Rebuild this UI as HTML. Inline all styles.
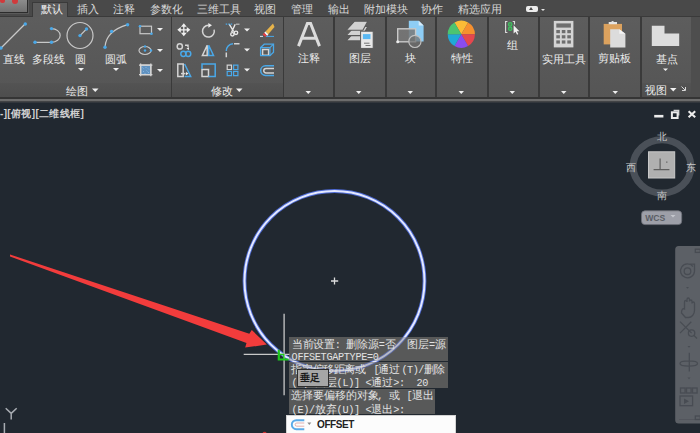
<!DOCTYPE html>
<html><head><meta charset="utf-8">
<style>
*{margin:0;padding:0;box-sizing:border-box}
html,body{width:700px;height:433px;overflow:hidden;background:#212830;font-family:"Liberation Sans",sans-serif}
.a{position:absolute}
.t{position:absolute;white-space:nowrap;font-size:11px;line-height:12px}
.tab{color:#d8d8d8;top:3px;font-weight:500}
.lb{color:#ececec;font-weight:500}
svg{position:absolute;left:0;top:0}
.tc{font-size:10.6px;fill:#e2e2e2}
.ta{font-family:"Liberation Mono",monospace;font-size:10.2px;fill:#e2e2e2}
.vc{font-size:9.5px;fill:#c8c8c8}
</style></head><body>
<!-- tab bar -->
<div class="a" style="left:0;top:0;width:700px;height:17px;background:#494949"></div>
<div class="a" style="left:0;top:0;width:29px;height:14px;background:#5a5a5a"></div>
<div class="a" style="left:0;top:0;width:28px;height:13px;background:linear-gradient(#8c8c8c,#707070);border-right:1px solid #2c2c2c;border-bottom:1px solid #2c2c2c"></div>
<div class="a" style="left:0;top:0;width:4.5px;height:3px;background:#d03a3c;border-radius:0 0 2px 2px"></div>
<div class="a" style="left:12px;top:0;width:5.5px;height:3.5px;background:#d03a3c;border-radius:0 0 3px 3px"></div>
<div class="t tab" style="left:77px">插入</div>
<div class="t tab" style="left:113px">注释</div>
<div class="t tab" style="left:150px">参数化</div>
<div class="t tab" style="left:197px">三维工具</div>
<div class="t tab" style="left:254px">视图</div>
<div class="t tab" style="left:291px">管理</div>
<div class="t tab" style="left:328px">输出</div>
<div class="t tab" style="left:364px">附加模块</div>
<div class="t tab" style="left:421px">协作</div>
<div class="t tab" style="left:458px">精选应用</div>
<div class="a" style="left:525.5px;top:5.5px;width:12px;height:6px;background:#ececec;border-radius:2px"></div>
<div class="a" style="left:529px;top:7px;width:0;height:0;border-left:2.5px solid transparent;border-right:2.5px solid transparent;border-bottom:3px solid #494949"></div>
<div class="a" style="left:541px;top:9px;width:0;height:0;border-left:2.5px solid transparent;border-right:2.5px solid transparent;border-top:2.5px solid #e4e4e4"></div>

<!-- ribbon -->
<div class="a" style="left:0;top:16px;width:700px;height:82px;background:#3a3a3a"></div>
<div class="a" style="left:32px;top:2px;width:36px;height:16px;background:#5c5c5c;border-left:1px solid #3a3a3a;border-top:1px solid #3a3a3a;border-right:1px solid #3a3a3a;border-bottom:0"></div>
<div class="t tab" style="left:41px;color:#f2f2f2">默认</div>
<div class="a" style="left:0px;top:17px;width:171px;height:80px;background:linear-gradient(#5d5d5d,#555555)"></div>
<div class="a" style="left:172px;top:17px;width:111px;height:80px;background:linear-gradient(#5d5d5d,#555555)"></div>
<div class="a" style="left:284px;top:17px;width:49px;height:80px;background:linear-gradient(#5d5d5d,#555555)"></div>
<div class="a" style="left:335px;top:17px;width:50px;height:80px;background:linear-gradient(#5d5d5d,#555555)"></div>
<div class="a" style="left:387px;top:17px;width:48px;height:80px;background:linear-gradient(#5d5d5d,#555555)"></div>
<div class="a" style="left:437px;top:17px;width:50px;height:80px;background:linear-gradient(#5d5d5d,#555555)"></div>
<div class="a" style="left:489px;top:17px;width:49px;height:80px;background:linear-gradient(#5d5d5d,#555555)"></div>
<div class="a" style="left:540px;top:17px;width:48px;height:80px;background:linear-gradient(#5d5d5d,#555555)"></div>
<div class="a" style="left:590px;top:17px;width:50px;height:80px;background:linear-gradient(#5d5d5d,#555555)"></div>
<div class="a" style="left:642px;top:17px;width:49px;height:80px;background:linear-gradient(#5d5d5d,#555555)"></div>
<div class="a" style="left:691px;top:17px;width:9px;height:80px;background:#4e4e4e"></div>
<!-- label rows -->
<div class="a" style="left:0;top:83px;width:171px;height:14px;background:linear-gradient(#535353,#4e4e4e)"></div>
<div class="a" style="left:172px;top:83px;width:111px;height:14px;background:linear-gradient(#535353,#4e4e4e)"></div>
<div class="a" style="left:642px;top:83px;width:49px;height:14px;background:linear-gradient(#535353,#4e4e4e)"></div>
<div class="a" style="left:0;top:97px;width:700px;height:2px;background:#353535"></div>
<div class="a" style="left:0;top:99px;width:700px;height:1.5px;background:#6c6c6c"></div>
<div class="a" style="left:0;top:100.5px;width:700px;height:2px;background:linear-gradient(#4a4a4a,#2a3038)"></div>

<div class="t lb" style="left:3px;top:53.3px">直线</div>
<div class="t lb" style="left:32px;top:53.3px">多段线</div>
<div class="t lb" style="left:75px;top:53.3px">圆</div>
<div class="t lb" style="left:105px;top:53.3px">圆弧</div>
<div class="t lb" style="left:66px;top:85px">绘图</div>
<div class="t lb" style="left:211px;top:85px">修改</div>
<div class="t lb" style="left:297.5px;top:52px">注释</div>
<div class="t lb" style="left:348.5px;top:52px">图层</div>
<div class="t lb" style="left:404.5px;top:52px">块</div>
<div class="t lb" style="left:451px;top:52px">特性</div>
<div class="t lb" style="left:507px;top:38.5px">组</div>
<div class="t lb" style="left:541.8px;top:52.8px">实用工具</div>
<div class="t lb" style="left:598.3px;top:51.5px">剪贴板</div>
<div class="t lb" style="left:656px;top:53.2px">基点</div>
<div class="t lb" style="left:644.5px;top:83.6px">视图</div>

<!-- viewport -->
<div class="a" style="left:0;top:102.5px;width:700px;height:331px;background:#212830"></div>
<div class="t" style="left:0;top:107.5px;font-size:10px;color:#d0d0d0;font-weight:bold;letter-spacing:.35px">-][俯视][二维线框]</div>

<svg width="700" height="433" viewBox="0 0 700 433">
 <defs>
  <filter id="glow" x="-20%" y="-20%" width="140%" height="140%"><feGaussianBlur stdDeviation="0.75"/></filter>
 </defs>
 <g fill="#f0f0f0">
  <path d="M78,68h6l-3,3z"/><path d="M113,68h6l-3,3z"/>
  <path d="M157,28h6l-3,3z"/><path d="M157,49h6l-3,3z"/><path d="M157,69h6l-3,3z"/>
  <path d="M92,88.5h6.5l-3.25,3.5z"/><path d="M236,88.5h6.5l-3.25,3.5z"/>
  <path d="M244,28.5h6l-3,3z"/><path d="M244,48.5h6l-3,3z"/><path d="M244,68.5h6l-3,3z"/>
  <path d="M305.5,91h5.5l-2.75,3z"/><path d="M356,91h5.5l-2.75,3z"/><path d="M407.5,91h5.5l-2.75,3z"/><path d="M458.5,91h5.5l-2.75,3z"/>
  <path d="M509.5,91h5.5l-2.75,3z"/><path d="M561,91h5.5l-2.75,3z"/><path d="M612.5,91h5.5l-2.75,3z"/><path d="M663,68.5h5l-2.5,2.5z"/>
  <path d="M670,88h6.5l-3.25,3.5z"/>
 </g>
 <path d="M681.5,86.5l3.5,3.5M685.5,87v3.5h-3.5" stroke="#d8d8d8" stroke-width="1" fill="none"/>
 <!-- draw icons -->
 <g stroke="#c8c8c8" stroke-width="1.2" fill="none">
  <path d="M1,48 L25,24"/>
  <path d="M35,42.3H51.5 A8.7,6.85 0 0 0 51.5,28.6"/>
  <circle cx="80" cy="35.5" r="13"/>
  <path d="M86.5,29L80,35.6"/>
  <path d="M105,47.2 Q106,31 127.6,24.7"/>
  <rect x="140" y="26.2" width="11.5" height="7.5"/>
  <ellipse cx="145" cy="50.5" rx="6" ry="4"/>
 </g>
 <g fill="#4aa8e8">
  <circle cx="1" cy="48" r="1.7"/><circle cx="25.3" cy="24" r="1.7"/>
  <circle cx="35" cy="42.3" r="1.7"/><circle cx="51.5" cy="42.3" r="1.7"/><circle cx="51.5" cy="28.6" r="1.7"/>
  <circle cx="80" cy="35.6" r="1.7"/><circle cx="86.5" cy="29" r="1.7"/>
  <circle cx="105" cy="47.2" r="1.7"/><circle cx="111.6" cy="31.4" r="1.7"/><circle cx="127.6" cy="24.7" r="1.7"/>
  <circle cx="140" cy="26.2" r="1.3"/><circle cx="151.5" cy="33.7" r="1.3"/>
  <circle cx="145" cy="50.5" r="1.2"/><circle cx="145" cy="46.5" r="1.2"/><circle cx="151" cy="50.5" r="1.2"/>
 </g>
 <rect x="140.6" y="65.1" width="10.2" height="9.6" fill="#6092c0" stroke="#d4d4d4" stroke-width="1.3"/>
 <path d="M139,65.1h13.4M139,74.7h13.4M140.6,63.6v12.6M150.8,63.6v12.6" stroke="#d4d4d4" stroke-width="1.3"/>
 <path d="M142.5,67.5l1,1M145.5,67l1,1M148,68.5l1,1M143,71l1,1M146.5,70.5l1,1M144.5,73l1,1M148,72l1,1" stroke="#8ab8e4" stroke-width=".9"/>
 <!-- modify icons -->
 <path d="M183.8,23.3L180.9,26.8H186.7zM183.8,36.3L180.9,32.8H186.7zM177.3,29.8L180.8,26.9V32.7zM190.3,29.8L186.8,26.9V32.7z" fill="#efefef"/>
 <path d="M179,29.8h9.6M183.8,25v9.6" stroke="#efefef" stroke-width="1.3"/>
 <g stroke="#d4d4d4" stroke-width="1.5" fill="none">
  <path d="M208.6,25.3 A5.9,5.9 0 1 0 214.1,29.6"/>
  <circle cx="179.8" cy="46.4" r="2.6"/>
  <path d="M185,45.3h3v2"/>
  <path d="M207.2,45.2L202.4,55.4H207.2z"/>
  <path d="M177.8,64h5.4v12.4h-5.4z"/>
  <path d="M181,73.6h4.5"/>
  <path d="M202,69.5h6.5v6.9h-6.5z"/>
  <path d="M226.3,52.5v4.7M234,43.8h5.5"/>
  <path d="M227.2,65.2h4.3v4.3h-4.3z" stroke-width="1.2"/>
  <path d="M262.6,49.6h6v5.6h-6z"/>
  <path d="M274,68.5h-8a2.2,2.2 0 0 0 0,4.5h8"/>
 </g>
 <path d="M186.4,48.5l2.6,-1.2v2.6z" fill="#ececec"/>
 <path d="M208.3,22.9V27.7L212,25.3z" fill="#ececec"/>
 <path d="M186,72l2.6,1.6l-2.6,1.6z" fill="#ececec"/>
 <path d="M208.7,45.2L213.5,55.4H208.7z" fill="none" stroke="#4aa8e8" stroke-width="1.5"/>
 <g stroke="#4aa8e8" stroke-width="1.5" fill="none">
  <circle cx="183.4" cy="53.8" r="2.6"/><circle cx="188.2" cy="53.8" r="2.6"/>
  <path d="M184.6,64L190.7,76.4H184.6"/>
  <path d="M202,69V64h13.2v12.4H208.5"/>
  <path d="M226.3,51A7,7 0 0 1 233,43.8"/>
  <path d="M233.6,65.2h4.3v4.3h-4.3z" stroke-width="1.2"/><path d="M227.2,71.4h4.3v4.3h-4.3z" stroke-width="1.2"/><path d="M233.6,71.4h4.3v4.3h-4.3z" stroke-width="1.2"/>
  <path d="M274,65.8h-8.5a4.6,4.6 0 0 0 0,9.6h8.5"/>
  <path d="M260.6,55.6V47.6L264.2,44.2H273.5V52.2L270,55.6Z" stroke-width="1.3"/>
  <path d="M260.6,47.6H270V55.6M270,47.6L273.5,44.2" stroke-width="1.1"/>
 </g>
 <g stroke="#e8e8e8" stroke-width="1.4" fill="none">
  <path d="M229.2,24.2l4.5,7.5M235.2,24.2l-3.6,8"/>
  <circle cx="232.4" cy="34.3" r="1.7"/><circle cx="236" cy="32.8" r="1.7"/>
 </g>
 <path d="M225.7,24.2h7" stroke="#4aa8e8" stroke-width="1.2" stroke-dasharray="1.5,1"/>
 <path d="M236,24.2h3.5" stroke="#bdbdbd" stroke-width="1.2"/>
 <path d="M265.5,31.5l7.5,-8l1.5,3.5l-6.5,7.5z" fill="#e8b44a"/>
 <path d="M264.2,32.8l1.3,-1.3l2.9,3.1l-1.3,1.3z" fill="#f4f4f4"/>
 <path d="M262.6,34.5l1.6,-1.7l2.9,3.1l-1.8,0.8z" fill="#e83c40"/>
 <path d="M260,36.4h3M266,36.4h8" stroke="#4aa8e8" stroke-width="1"/>
 <path d="M260,36.4h3" stroke="#e0e0e0" stroke-width="1"/>
 <!-- 注释 A -->
 <path d="M298.5,46.1L307.4,23.5h3.2L319.5,46.1M302.5,38.3h13" stroke="#dcdcdc" stroke-width="3" fill="none"/>
 <!-- layers -->
 <g fill="#d2d2d2" stroke="#595959" stroke-width="1.1">
  <path d="M354.5,31.8h13.3l-4.9,9.1h-16.8z"/>
  <path d="M354.5,26.5h13.3l-4.9,9.1h-16.8z"/>
  <path d="M354.5,21.2h13.3l-4.9,9.1h-16.8z"/>
 </g>
 <rect x="360.6" y="31.2" width="12.6" height="17.2" fill="#e8e8e8" stroke="#595959" stroke-width="1"/>
 <rect x="362.9" y="34.1" width="7.6" height="5" fill="#5ab8f2"/>
 <path d="M364,43.2h5.5M365.5,45.5h5" stroke="#666" stroke-width=".9"/>
 <!-- block -->
 <path d="M408.8,20.8h9.9l4.9,4.6v16h-14.8z" fill="#8ecdf5"/>
 <path d="M418.7,20.8v4.6h4.9z" fill="#d8ecfa"/>
 <rect x="397.7" y="28.8" width="17.9" height="13" fill="rgba(120,120,120,.85)" stroke="#c8c8c8" stroke-width="1.4"/>
 <circle cx="414.9" cy="41.4" r="6.1" fill="rgba(110,110,110,.7)" stroke="#c0c0c0" stroke-width="1.2"/>
 <circle cx="397.7" cy="41.8" r="1.5" fill="#ececec"/>
 <!-- color wheel -->
 <g transform="translate(461.3,34.2)">
  <path d="M0,0L-6.8,-11.7776A13.6,13.6 0 0 1 6.8,-11.7776z" fill="#fbbb36"/>
  <path d="M0,0L6.8,-11.7776A13.6,13.6 0 0 1 13.6,0z" fill="#f6902f"/>
  <path d="M0,0L13.6,0A13.6,13.6 0 0 1 6.8,11.7776z" fill="#e6474e"/>
  <path d="M0,0L6.8,11.7776A13.6,13.6 0 0 1 -6.8,11.7776z" fill="#8a4cf0"/>
  <path d="M0,0L-6.8,11.7776A13.6,13.6 0 0 1 -13.6,0z" fill="#20a9d6"/>
  <path d="M0,0L-13.6,0A13.6,13.6 0 0 1 -6.8,-11.7776z" fill="#4cc470"/>
 </g>
 <!-- group -->
 <path d="M507.4,21.5h-1.8v11h1.8M512.7,21.5h1.8v3" stroke="#dcdcdc" stroke-width="1.1" fill="none"/>
 <circle cx="510.2" cy="24.4" r="1.7" fill="#5a7a60" stroke="#3cc45e" stroke-width="1.2"/><circle cx="510.2" cy="28.8" r="1.7" fill="#5a7a60" stroke="#3cc45e" stroke-width="1.2"/>
 <path d="M513.6,25.3v8.2l1.9,-1.8l1.6,3l1.2,-.6l-1.5,-2.9h2.6z" fill="#f0f0f0"/>
 <!-- calculator -->
 <rect x="553.8" y="20.9" width="19.6" height="26.5" fill="#d4d4d4"/>
 <rect x="556.3" y="23.4" width="14.6" height="4.2" fill="#6e6e6e"/>
 <g fill="#6e6e6e">
  <rect x="556.3" y="30" width="3.6" height="3.2"/><rect x="561.8" y="30" width="3.6" height="3.2"/><rect x="567.3" y="30" width="3.6" height="3.2"/>
  <rect x="556.3" y="35.2" width="3.6" height="3.2"/><rect x="561.8" y="35.2" width="3.6" height="3.2"/><rect x="567.3" y="35.2" width="3.6" height="3.2"/>
  <rect x="556.3" y="40.4" width="3.6" height="3.2"/><rect x="561.8" y="40.4" width="3.6" height="3.2"/><rect x="567.3" y="40.4" width="3.6" height="3.2"/>
 </g>
 <!-- clipboard -->
 <rect x="603.7" y="23.9" width="18.3" height="20.5" fill="#dca25e"/>
 <path d="M608.7,24.2v-2.2h2.6a1.4,1.4 0 0 1 2.6,0h3.1v2.2z" fill="#e4e4e4"/>
 <path d="M610.2,29.2h9.1l6.1,4.6v13.7h-15.2z" fill="#dcdcdc"/>
 <path d="M619.3,29.2v4.6h6.1z" fill="#f4f4f4"/>
 <!-- base point -->
 <path d="M651.8,25.8h12.7v7.8h14.7v12.4h-27.4z" fill="#dddddd"/>
 <!-- viewport: arrow -->
 <path d="M10,254.4L249.3,333.7L251.8,330L266.8,344.6L245.2,347.6L246.5,343L10,256.4Z" fill="#f23c3c"/>
 <!-- circle -->
 <circle cx="334.5" cy="281" r="90" fill="none" stroke="#4e6ad4" stroke-width="3.8" filter="url(#glow)"/>
 <circle cx="334.5" cy="281" r="90" fill="none" stroke="#e4e9ff" stroke-width="2"/>
 <path d="M331,281h7.2M334.5,277.4v7.2" stroke="#dcdcdc" stroke-width="1.3"/>
 <!-- viewcube -->
 <ellipse cx="662" cy="166.4" rx="28.9" ry="26.6" fill="none" stroke="#4a5058" stroke-width="7"/>
 <rect x="648.5" y="151.8" width="26.2" height="26.2" fill="#b0b0b0" stroke="#c8c8c8" stroke-width="1"/>
 <path d="M653.6,169.6h15.8M660.1,158.5v11.1M666.2,162.2h1.2" stroke="#5e5e5e" stroke-width="1.2" fill="none"/>
 <text class="vc" x="656.7" y="139.8">北</text>
 <text class="vc" x="656.7" y="198.8">南</text>
 <text class="vc" x="626.4" y="170.5">西</text>
 <text class="vc" x="686" y="170.5">东</text>
 <!-- window ctrls -->
 <path d="M654.2,116.2h9.2" stroke="#ececec" stroke-width="2.6"/>
 <rect x="671.9" y="112.3" width="5.7" height="5.7" fill="none" stroke="#ececec" stroke-width="2"/>
 <path d="M673.6,110.6h5v5" fill="none" stroke="#d8d8d8" stroke-width="1.5"/>
 <path d="M688.6,111.2l6.6,6M695.2,111.2l-6.6,6" stroke="#ececec" stroke-width="2.1"/>
 <!-- WCS -->
 <rect x="641.5" y="210.8" width="40.2" height="13.8" rx="3.5" fill="#9d9fa8" stroke="#6d7079" stroke-width=".8"/>
 <text x="645.2" y="220.5" style="font-size:8.6px;font-weight:bold;fill:#5a5d64">WCS</text>
 <path d="M670.5,215h5l-2.5,2.5z" fill="#c4c6cc"/>
 <!-- nav bar -->
 <path d="M675.2,249.5a3.5,3.5 0 0 1 3.5,-3.5H700V423.5H678.7a3.5,3.5 0 0 1 -3.5,-3.5z" fill="#5c6066"/>
 <path d="M679,419.5H700" stroke="#50545a" stroke-width=".8"/>
 <g stroke="#484c53" stroke-width="1.3" fill="none">
  <path d="M693,266.5A7,7 0 1 0 694.5,271.2V264.2H689.5"/><circle cx="687.5" cy="271.2" r="3.3"/>
  <path d="M680,321.6l11.6,11.5M691.3,321.8l-11.3,11.3"/>
  <circle cx="691.6" cy="333.1" r="3.2"/><path d="M694,335.5l3,3"/>
  <path d="M689.3,352.7v18.7M680,363.5c0,-3.5 17.5,-3.5 17.5,0c0,3.5 -17.5,3.5 -17.5,0"/>
  <rect x="680.5" y="388" width="4.6" height="5"/><rect x="686.5" y="388" width="4.6" height="5"/><rect x="692.5" y="388" width="4.6" height="5"/>
  <rect x="680" y="396" width="12.6" height="9.7"/>
  <path d="M681.5,313c0,-3 1,-5 3,-4v-7c0,-2 2.5,-2 2.5,0v-2.5c0,-2 2.5,-2 2.5,0v2c0,-2 2.5,-2 2.5,0v2c0,-2 2.5,-2 2.5,0v7c0,4 -3,7 -6,7h-3z"/>
  <rect x="695.3" y="249.2" width="5" height="3.2"/>
  <rect x="695.3" y="416" width="5" height="3.5"/>
 </g>
 <g fill="#484c53"><path d="M686,287h3l-1.5,1.8z"/><path d="M687.5,346h3l-1.5,1.8z"/><path d="M687.5,377.5h3l-1.5,1.8z"/><path d="M684,398.5v5.5l5,-2.75z"/></g>
 <!-- Y axis -->
 <path d="M5.7,408.2L11.2,413.4L16.7,408.2M11.2,413.4V419.6M4.4,423V433" stroke="#a8acb2" stroke-width="1.5" fill="none"/>
 <circle cx="264.6" cy="434" r="2.2" fill="#d03030"/>
</svg>

<!-- tooltip blocks -->
<div class="a" style="left:289.4px;top:336.6px;width:158.8px;height:24.4px;background:rgba(102,101,100,.8)"></div>
<div class="a" style="left:289.4px;top:362.4px;width:158.8px;height:25.2px;background:rgba(102,101,100,.8)"></div>
<div class="a" style="left:289.4px;top:389.4px;width:145.3px;height:24.4px;background:rgba(102,101,100,.8)"></div>
<svg width="700" height="433" viewBox="0 0 700 433">
 <defs><clipPath id="ttc"><rect x="289.4" y="336.6" width="158.8" height="24.4"/><rect x="289.4" y="362.4" width="158.8" height="25.2"/></clipPath></defs>
 <g clip-path="url(#ttc)" opacity=".55">
  <circle cx="334.5" cy="281" r="90" fill="none" stroke="#5a74d8" stroke-width="3.4"/>
  <circle cx="334.5" cy="281" r="90" fill="none" stroke="#e4e9ff" stroke-width="1.8"/>
 </g>
<text class="tc" x="291.6 302.5 313.4 324.3" y="347.5">当前设置</text>
<text class="ta" x="334.8" y="347.5">:</text>
<text class="tc" x="346.1 357.0 367.9" y="347.5">删除源</text>
<text class="ta" x="378.8" y="347.5">=</text>
<text class="tc" x="384.6" y="347.5">否</text>
<text class="tc" x="407.1 418.0" y="347.5">图层</text>
<text class="ta" x="428.9" y="347.5">=</text>
<text class="tc" x="434.7" y="347.5">源</text>
<text class="ta" x="291.6 297.4 303.2 309.0 314.8 320.6 326.4 332.2 338.0 343.8 349.6 355.4 361.2 367.0 372.8" y="359.8">OFFSETGAPTYPE=0</text>
<text class="tc" x="291.4 302.0 312.6 323.2 333.8 344.4 355.0" y="373.2">指定偏移距离或</text>
<text class="ta" x="373.5" y="373.2">[</text>
<text class="tc" x="378.3 389.3" y="373.2">通过</text>
<text class="ta" x="401.5 407.1 412.7 418.3" y="373.2">(T)/</text>
<text class="tc" x="423.6 434.0" y="373.2">删除</text>
<text class="ta" x="291.6 297.4 303.2 309.0" y="386.0">(E)/</text>
<text class="tc" x="314.8 325.7" y="386.0">图层</text>
<text class="ta" x="336.6 342.4 348.2 354.0" y="386.0">(L)]</text>
<text class="ta" x="365.6" y="386.0">&lt;</text>
<text class="tc" x="371.4 382.3" y="386.0">通过</text>
<text class="ta" x="393.2 399.0" y="386.0">&gt;:</text>
<text class="ta" x="416.4 422.2" y="386.0">20</text>
<text class="tc" x="291.4 302.3 313.2 324.1 335.0 345.9 356.8 367.7" y="399.4">选择要偏移的对象</text>
<text class="ta" x="377.3" y="399.4">,</text>
<text class="tc" x="389.0" y="399.4">或</text>
<text class="ta" x="406.4" y="399.4">[</text>
<text class="tc" x="412.2 423.1" y="399.4">退出</text>
<text class="ta" x="291.6 297.4 303.2 309.0" y="412.6">(E)/</text>
<text class="tc" x="314.8 325.7" y="412.6">放弃</text>
<text class="ta" x="336.6 342.4 348.2 354.0" y="412.6">(U)]</text>
<text class="ta" x="365.6" y="412.6">&lt;</text>
<text class="tc" x="371.4 382.3" y="412.6">退出</text>
<text class="ta" x="393.2 399.0" y="412.6">&gt;:</text>

 <path d="M284.1,313.7V395.2M243.7,354.3H289.4" stroke="#c8c8c8" stroke-width="1.3"/>
 <path d="M278.8,349.8V359.5H288.6" stroke="#1ec81e" stroke-width="2.2" fill="none"/>
 <path d="M278.8,354.5h5v5" stroke="#1ec81e" stroke-width="1.3" fill="none"/>
</svg>
<div class="a" style="left:296.6px;top:369.4px;width:32px;height:17.4px;background:#a6a6a6;border:1px solid #2e2e2e"></div>
<div class="t" style="left:299.6px;top:372px;color:#181818;font-size:10px;font-weight:bold">垂足</div>

<!-- command line -->
<div class="a" style="left:286.4px;top:415px;width:170px;height:20px;background:#fcfcfc;border:1px solid #d4d4d4"></div>
<svg width="700" height="433" viewBox="0 0 700 433">
 <path d="M304.3,420.2h-8a4.5,4.5 0 0 0 0,9h8" stroke="#5aaae8" stroke-width="1.9" fill="none"/>
 <path d="M304.3,423h-7.5a1.6,1.6 0 0 0 0,3.2h7.5" stroke="#e0a8a8" stroke-width=".9" fill="none"/>
 <path d="M307.3,422.5h4l-2,2.5z" fill="#8a8a8a"/>
</svg>
<div class="t" style="left:317px;top:418.5px;font-size:10px;font-weight:bold;color:#222;letter-spacing:-.4px">OFFSET</div>
</body></html>
